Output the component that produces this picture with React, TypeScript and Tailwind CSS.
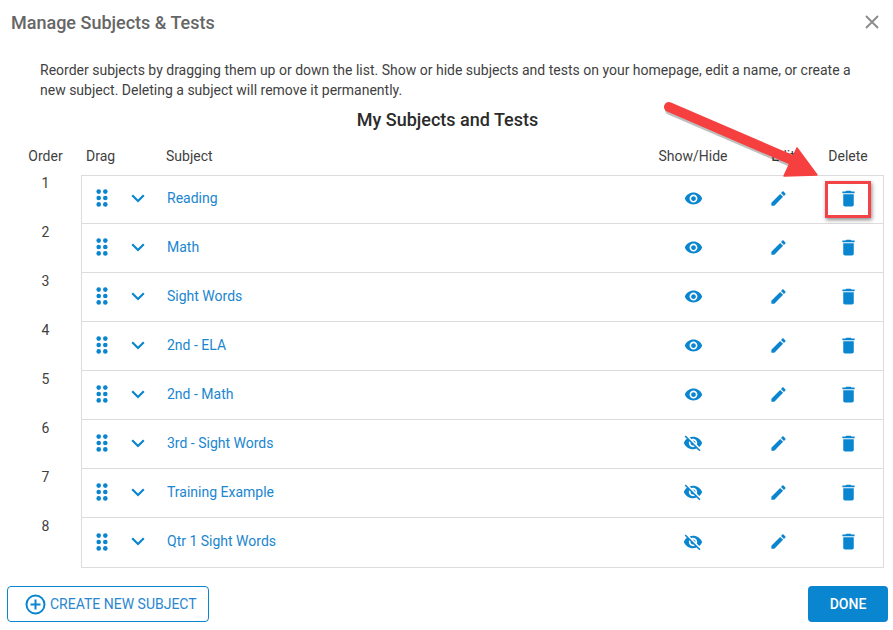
import React from "react";

const subjects = [
  { name: "Reading", visible: true },
  { name: "Math", visible: true },
  { name: "Sight Words", visible: true },
  { name: "2nd - ELA", visible: true },
  { name: "2nd - Math", visible: true },
  { name: "3rd - Sight Words", visible: false },
  { name: "Training Example", visible: false },
  { name: "Qtr 1 Sight Words", visible: false },
];

const DragDots = () => (
  <svg width="12" height="18" viewBox="0 0 12 18" className="fill-[#0a85cf]">
    <circle cx="2.7" cy="2.6" r="2.3" />
    <circle cx="9.3" cy="2.6" r="2.3" />
    <circle cx="2.7" cy="9" r="2.3" />
    <circle cx="9.3" cy="9" r="2.3" />
    <circle cx="2.7" cy="15.4" r="2.3" />
    <circle cx="9.3" cy="15.4" r="2.3" />
  </svg>
);

const Chevron = () => (
  <svg width="14" height="9" viewBox="0 0 14 9" fill="none" className="stroke-[#0a85cf]">
    <path d="M1.2 1.3 7 7l5.8-5.7" strokeWidth="2.2" />
  </svg>
);

const Eye = () => (
  <svg width="19" height="19" viewBox="0 0 24 24" className="fill-[#0a85cf]">
    <path d="M12 4.5C7 4.5 2.73 7.61 1 12c1.73 4.39 6 7.5 11 7.5s9.27-3.11 11-7.5c-1.73-4.39-6-7.5-11-7.5zM12 17c-2.76 0-5-2.24-5-5s2.24-5 5-5 5 2.24 5 5-2.24 5-5 5zm0-8c-1.66 0-3 1.34-3 3s1.34 3 3 3 3-1.34 3-3-1.34-3-3-3z" />
  </svg>
);

const EyeOff = () => (
  <svg width="20" height="20" viewBox="0 0 24 24" className="fill-[#0a85cf]">
    <path d="M12 7c2.76 0 5 2.24 5 5 0 .65-.13 1.26-.36 1.83l2.92 2.92c1.51-1.26 2.7-2.89 3.43-4.75-1.73-4.39-6-7.5-11-7.5-1.4 0-2.74.25-3.98.7l2.16 2.16C10.74 7.13 11.35 7 12 7zM2 4.27l2.28 2.28.46.46C3.08 8.3 1.78 10.02 1 12c1.73 4.39 6 7.5 11 7.5 1.55 0 3.03-.3 4.38-.84l.42.42L19.73 22 21 20.73 3.27 3 2 4.27zM7.53 9.8l1.55 1.55c-.05.21-.08.43-.08.65 0 1.66 1.34 3 3 3 .22 0 .44-.03.65-.08l1.55 1.55c-.67.33-1.41.53-2.2.53-2.76 0-5-2.24-5-5 0-.79.2-1.53.53-2.2zm4.31-.78l3.15 3.15.02-.16c0-1.66-1.34-3-3-3l-.17.01z" />
  </svg>
);

const Pencil = () => (
  <svg width="19" height="19" viewBox="0 0 24 24" className="fill-[#0a85cf]">
    <path d="M3 17.25V21h3.75L17.81 9.94l-3.75-3.75L3 17.25zM20.71 7.04c.39-.39.39-1.02 0-1.41l-2.34-2.34c-.39-.39-1.02-.39-1.41 0l-1.83 1.83 3.75 3.75 1.83-1.83z" />
  </svg>
);

const Trash = () => (
  <svg width="21" height="21" viewBox="0 0 24 24" className="fill-[#0a85cf]">
    <path d="M6 19c0 1.1.9 2 2 2h8c1.1 0 2-.9 2-2V7H6v12zM19 4h-3.5l-1-1h-5l-1 1H5v2h14V4z" />
  </svg>
);

const Callout = () => (
  <>
    <div className="absolute left-[825px] top-[181px] w-[46px] h-[37px] border-[3px] border-[#f44347] shadow-[1px_2px_4px_rgba(0,0,0,0.45)]" />
    <svg width="893" height="630" className="absolute left-0 top-0 pointer-events-none">
      <path d="M669 108 790 160" stroke="#00000040" strokeWidth="10" strokeLinecap="round" transform="translate(1 2)" />
      <path d="M669 107 792 160" stroke="#f5403f" strokeWidth="10" strokeLinecap="round" />
      <path d="M797 148 817 175 784 176Z" fill="#f5403f" stroke="#f5403f" strokeWidth="1.5" strokeLinejoin="round" />
    </svg>
  </>
);

const SubjectRow: React.FC<{ name: string; visible: boolean; first: boolean; last: boolean }> = ({
  name,
  visible,
  first,
  last,
}) => (
  <div
    className={`flex items-center pr-[5px] ${first ? "h-[48px] pb-[3px]" : "h-[49px] pb-[2px]"} ${
      last ? "" : "border-b border-[#dcdcdc]"
    }`}
  >
    <div className="w-[40px] flex justify-center">
      <DragDots />
    </div>
    <div className="w-[32px] flex justify-center">
      <Chevron />
    </div>
    <div className="flex-1 pl-[13px] text-[14px] text-[#1a86d0]">{name}</div>
    <div className="w-[60px] flex justify-center">{visible ? <Eye /> : <EyeOff />}</div>
    <div className="w-[60px] ml-[25px] flex justify-center">
      <Pencil />
    </div>
    <div className="w-[60px] ml-[10px] flex justify-center">
      <Trash />
    </div>
  </div>
);

export default function App() {
  return (
    <div className="relative w-[893px] h-[630px] bg-white overflow-hidden font-['Roboto',sans-serif] text-[#3f3f3f]">
      <div className="flex items-center justify-between h-[44px] pl-[11px] pr-[13px]">
        <h1 className="text-[18px] font-medium text-[#666666]">Manage Subjects &amp; Tests</h1>
        <svg width="16" height="16" viewBox="0 0 16 16" className="stroke-[#8a8a8a]" fill="none">
          <path d="M2 2l12 12M14 2 2 14" strokeWidth="1.8" />
        </svg>
      </div>

      <p className="mt-[16px] ml-[40px] w-[830px] text-[14px] leading-[20px]">
        Reorder subjects by dragging them up or down the list. Show or hide subjects and tests on your homepage, edit a
        name, or create a new subject. Deleting a subject will remove it permanently.
      </p>

      <h2 className="h-[38px] flex items-center justify-center pl-[2px] text-[18px] font-medium text-[#2b2b2b]">
        My Subjects and Tests
      </h2>

      <div className="flex h-[37px] items-center text-[14px]">
        <div className="w-[81px] pl-[10px] text-center">Order</div>
        <div className="w-[85px] pl-[5px]">Drag</div>
        <div className="flex-1">Subject</div>
        <div className="w-[70px] text-center">Show/Hide</div>
        <div className="w-[50px] ml-[30px] text-center">Edit</div>
        <div className="w-[60px] ml-[10px] mr-[15px] text-center">Delete</div>
      </div>

      <div className="flex">
        <div className="w-[81px] pl-[10px]">
          {subjects.map((s, i) => (
            <div key={s.name} className="h-[49px] text-center text-[14px] leading-[16px]">
              {i + 1}
            </div>
          ))}
        </div>
        <div className="w-[803px] border border-[#dcdcdc]">
          {subjects.map((s, i) => (
            <SubjectRow
              key={s.name}
              name={s.name}
              visible={s.visible}
              first={i === 0}
              last={i === subjects.length - 1}
            />
          ))}
        </div>
      </div>

      <div className="flex justify-between mt-[18px] pl-[7px] pr-[5px]">
        <button className="flex items-center gap-[4px] w-[202px] h-[36px] pl-[17px] border border-[#0a85cf] rounded-[4px] text-[14px] text-[#2a86cf]">
          <svg width="21" height="21" viewBox="0 0 21 21" fill="none" className="stroke-[#0a85cf]">
            <circle cx="10.5" cy="10.5" r="9" strokeWidth="2" />
            <path d="M10.5 5.5v10M5.5 10.5h10" strokeWidth="2" />
          </svg>
          CREATE NEW SUBJECT
        </button>
        <button className="w-[80px] h-[36px] rounded-[4px] bg-[#0a85cf] text-white text-[14px] font-medium">DONE</button>
      </div>

      <Callout />
    </div>
  );
}
